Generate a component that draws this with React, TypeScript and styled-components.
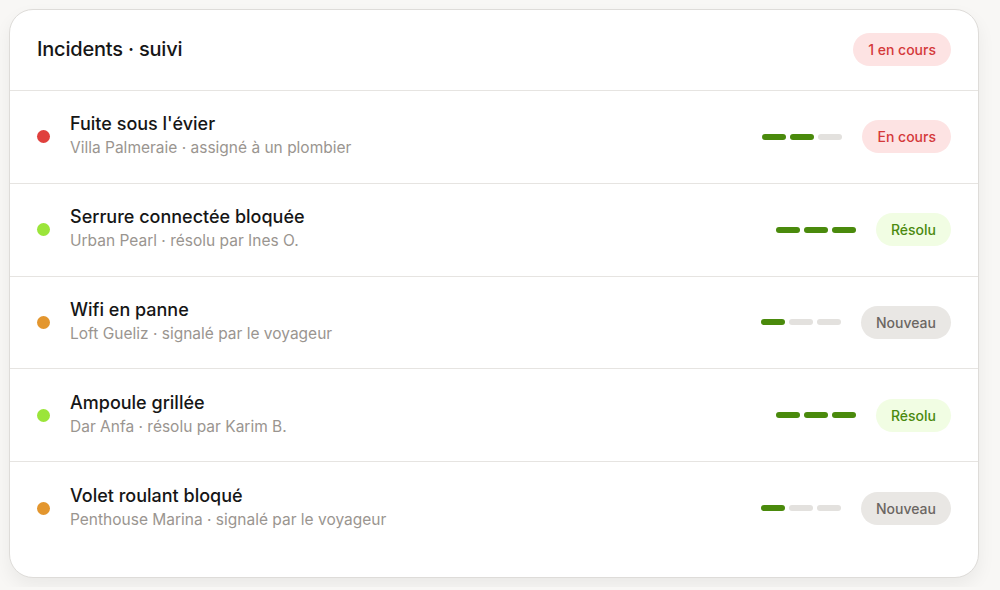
import React from 'react';
import styled, { createGlobalStyle } from 'styled-components';

const GlobalStyle = createGlobalStyle`
  body {
    margin: 0;
    background: #f8f7f5;
    font-family: Inter, "Noto Sans", sans-serif;
  }
`;

const Page = styled.div`
  padding: 9px;
`;

const Card = styled.div`
  width: 970px;
  box-sizing: border-box;
  background: #fff;
  border: 1px solid #dedcd9;
  border-radius: 24px;
  box-shadow: 0 8px 18px rgba(0, 0, 0, 0.06);
  padding-bottom: 23px;
  overflow: hidden;
`;

const Header = styled.div`
  display: flex;
  align-items: center;
  justify-content: space-between;
  height: 81px;
  box-sizing: border-box;
  padding: 0 27px 2px 27px;
  border-bottom: 1px solid #e6e4e1;
`;

const Title = styled.h1`
  margin: 0;
  font-size: 20px;
  font-weight: 500;
  color: #161616;
  letter-spacing: -0.2px;
`;

const tones = {
  red: { bg: '#fde3e3', fg: '#d4393a' },
  green: { bg: '#f1fde3', fg: '#4b8a0f' },
  gray: { bg: '#e9e7e4', fg: '#6b6662' },
};

type Tone = keyof typeof tones;

const Badge = styled.span<{ $tone: Tone }>`
  display: inline-flex;
  align-items: center;
  height: 33px;
  padding: 0 15px;
  border-radius: 17px;
  font-size: 14px;
  font-weight: 500;
  background: ${p => tones[p.$tone].bg};
  color: ${p => tones[p.$tone].fg};
`;

const List = styled.div`
  display: flex;
  flex-direction: column;
`;

const Row = styled.div`
  display: flex;
  align-items: center;
  height: 92.75px;
  box-sizing: border-box;
  padding: 0 27px 0 27px;
  border-bottom: 1px solid #e6e4e1;
  &:last-child {
    height: 92px;
    border-bottom: none;
  }
`;

const Dot = styled.span<{ $color: string }>`
  width: 13px;
  height: 13px;
  border-radius: 50%;
  background: ${p => p.$color};
  flex-shrink: 0;
`;

const Text = styled.div`
  flex: 1;
  margin: -3px 0 0 20px;
  display: flex;
  flex-direction: column;
  gap: 4px;
`;

const Name = styled.div`
  font-size: 18px;
  font-weight: 500;
  color: #161616;
`;

const Meta = styled.div`
  font-size: 15.5px;
  color: #9a9590;
`;

const Progress = styled.div`
  display: flex;
  gap: 4px;
  margin-right: 20px;
`;

const Seg = styled.span<{ $on: boolean }>`
  width: 24px;
  height: 6px;
  border-radius: 3px;
  background: ${p => (p.$on ? '#4a8a0c' : '#e3e1de')};
`;

interface Incident {
  name: string;
  meta: string;
  dot: string;
  steps: number;
  status: string;
  tone: Tone;
}

const incidents: Incident[] = [
  { name: "Fuite sous l'évier", meta: 'Villa Palmeraie · assigné à un plombier', dot: '#e0403d', steps: 2, status: 'En cours', tone: 'red' },
  { name: 'Serrure connectée bloquée', meta: 'Urban Pearl · résolu par Ines O.', dot: '#9be53a', steps: 3, status: 'Résolu', tone: 'green' },
  { name: 'Wifi en panne', meta: 'Loft Gueliz · signalé par le voyageur', dot: '#e3962e', steps: 1, status: 'Nouveau', tone: 'gray' },
  { name: 'Ampoule grillée', meta: 'Dar Anfa · résolu par Karim B.', dot: '#9be53a', steps: 3, status: 'Résolu', tone: 'green' },
  { name: 'Volet roulant bloqué', meta: 'Penthouse Marina · signalé par le voyageur', dot: '#e3962e', steps: 1, status: 'Nouveau', tone: 'gray' },
];

export default function App() {
  return (
    <Page>
      <GlobalStyle />
      <Card>
        <Header>
          <Title>Incidents · suivi</Title>
          <Badge $tone="red">1 en cours</Badge>
        </Header>
        <List>
          {incidents.map(item => (
            <Row key={item.name}>
              <Dot $color={item.dot} />
              <Text>
                <Name>{item.name}</Name>
                <Meta>{item.meta}</Meta>
              </Text>
              <Progress>
                {[0, 1, 2].map(i => (
                  <Seg key={i} $on={i < item.steps} />
                ))}
              </Progress>
              <Badge $tone={item.tone}>{item.status}</Badge>
            </Row>
          ))}
        </List>
      </Card>
    </Page>
  );
}
